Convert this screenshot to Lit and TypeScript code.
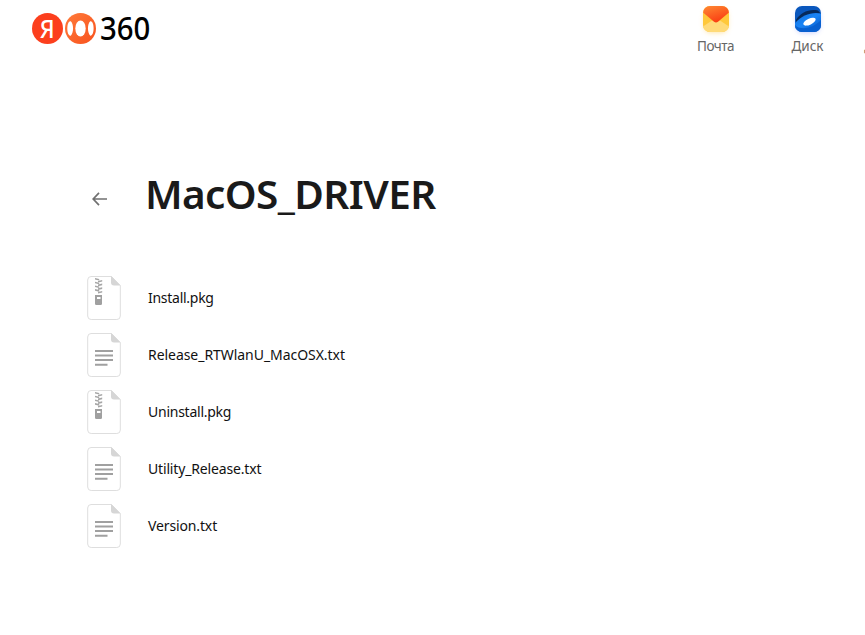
import { LitElement, html, css, svg } from "lit";
import { customElement, property } from "lit/decorators.js";

type FileKind = "archive" | "text";

@customElement("file-icon")
class FileIcon extends LitElement {
  @property() kind: FileKind = "text";

  static styles = css`
    :host { display: block; width: 34px; height: 44px; }
    svg { display: block; }
  `;

  render() {
    const teeth = [2, 5.7, 9.4, 13.1].map(
      (y) => svg`<path d="M8 ${y}l4.200 1v1.600l-4.200 -1ZM15.200 ${y + 1.9}l-4.200 1v1.600l4.200 -1Z" fill="#a6a6a6"/>`
    );
    return html`<svg width="34" height="44" viewBox="0 0 34 44">
      <path d="M4 .5H24.500L33.300 9.500V40a3.500 3.500 0 0 1-3.500 3.500H4.200A3.500 3.500 0 0 1 .7 40V4A3.500 3.500 0 0 1 4.200 .5Z" fill="#fff" stroke="#dedede"/>
      <path d="M24 0l9.500 9.500H27a3 3 0 0 1-3-3Z" fill="#d6d6d6"/>
      ${this.kind === "archive"
        ? svg`${teeth}<path fill-rule="evenodd" d="M8 19h7v8.700a1.300 1.300 0 0 1-1.300 1.300H9.300A1.300 1.300 0 0 1 8 27.700ZM10 21v2h3.500v-2Z" fill="#a0a0a0"/>`
        : svg`<path d="M8 18h18M8 22.500h18M8 27h18M8 31.700h12.500" stroke="#a0a0a0" stroke-width="1.900"/>`}
    </svg>`;
  }
}

@customElement("app-root")
class AppRoot extends LitElement {
  private files: { name: string; kind: FileKind; cls: string }[] = [
    { name: "Install.pkg", kind: "archive", cls: "install" },
    { name: "Release_RTWlanU_MacOSX.txt", kind: "text", cls: "release" },
    { name: "Uninstall.pkg", kind: "archive", cls: "uninstall" },
    { name: "Utility_Release.txt", kind: "text", cls: "utility" },
    { name: "Version.txt", kind: "text", cls: "version" },
  ];

  static styles = css`
    :host {
      display: block; width: 865px; height: 635px; overflow: hidden;
      background: #fff; color: #1a1a1a; font-family: "Noto Sans", sans-serif;
    }
    svg { display: block; overflow: visible; }
    header { display: flex; justify-content: space-between; height: 60px; }
    .logo { display: flex; margin: 13px 0 0 32px; height: 31px; }
    .services { display: flex; margin-right: -80.5px; }
    .service {
      display: flex; flex-direction: column; align-items: center;
      width: 92px; padding-top: 6px; font-size: 13.5px; line-height: 20px; color: #666;
    }
    .service svg { margin-bottom: 4px; }
    .mail { letter-spacing: -0.5px; }
    .disk { letter-spacing: 0; }
    .docs { letter-spacing: -0.45px; }
    .heading { display: flex; align-items: center; margin: 104px 0 0 92px; height: 60px; }
    .back { margin-top: 9px; }
    h1 { margin: 0 0 0 37px; font-size: 40.5px; line-height: 60px; font-weight: 600; letter-spacing: -0.6px; }
    ul { list-style: none; margin: 0; padding: 52px 0 0 87px; display: grid; row-gap: 13px; }
    li { display: flex; align-items: center; gap: 27px; height: 44px; font-size: 14px; line-height: 20px; color: #111; }
    .install { letter-spacing: -0.27px; }
    .release { letter-spacing: -0.05px; }
    .uninstall { letter-spacing: -0.25px; }
    .utility { letter-spacing: -0.16px; }
    .version { letter-spacing: -0.13px; }
  `;

  render() {
    return html`
      <header>
        <svg class="logo" width="118" height="31" viewBox="0 0 118 31">
          <defs>
            <linearGradient id="ring" x1="0" y1="0" x2="1" y2="1">
              <stop stop-color="#ff7b3a"/><stop offset="1" stop-color="#f8511d"/>
            </linearGradient>
          </defs>
          <circle cx="15.500" cy="15.500" r="15.500" fill="#fc3f1d"/>
          <text transform="translate(7.800 24.600) scale(.88 1)" font-size="26" font-weight="500" fill="#fff">Я</text>
          <circle cx="48.500" cy="15.500" r="15.500" fill="url(#ring)"/>
          <ellipse cx="48.500" cy="15.500" rx="5.200" ry="8" fill="#fff"/>
          <path d="M38.800 8.300c3 3 3 11.400 0 14.400C34.200 23.500 34.200 7.500 38.800 8.300ZM58.200 8.300c-3 3-3 11.400 0 14.400C62.800 23.500 62.800 7.500 58.200 8.300Z" fill="#fff"/>
          <text transform="translate(67.900 27) scale(.89 1)" font-size="33" font-weight="500" fill="#000">360</text>
        </svg>
        <nav class="services">
          <div class="service mail">
            <svg width="26" height="26" viewBox="0 0 26 26">
              <defs>
                <clipPath id="mc"><rect width="26" height="26" rx="7"/></clipPath>
                <linearGradient id="flap" x1="0" y1="0" x2=".5" y2="1">
                  <stop stop-color="#ff8a33"/><stop offset="1" stop-color="#fa3e13"/>
                </linearGradient>
                <filter id="ms" x="-50%" y="-50%" width="200%" height="200%"><feGaussianBlur stdDeviation="2.500"/></filter>
              </defs>
              <rect x="1" y="3" width="24" height="24" rx="7" fill="#ffcf58" opacity=".5" filter="url(#ms)"/>
              <g clip-path="url(#mc)">
                <rect width="26" height="26" fill="#ffc83a"/>
                <path d="M0 20.500L9 14.500H17L26 20.500V26H0Z" fill="#ffda78"/>
                <path d="M0 0H26V6.500L15 15.800Q13 17.300 11 15.800L0 6.500Z" fill="url(#flap)"/>
              </g>
            </svg>
            <span>Почта</span>
          </div>
          <div class="service disk">
            <svg width="26" height="26" viewBox="0 0 26 26">
              <defs>
                <clipPath id="dc"><rect width="26" height="26" rx="7"/></clipPath>
                <linearGradient id="saucer" x1="0" y1="0" x2="1" y2="1">
                  <stop stop-color="#0d6fe0"/><stop offset=".5" stop-color="#1a84f5"/><stop offset="1" stop-color="#0657c5"/>
                </linearGradient>
                <filter id="ds" x="-50%" y="-50%" width="200%" height="200%"><feGaussianBlur stdDeviation="2.500"/></filter>
              </defs>
              <rect x="1" y="3" width="24" height="24" rx="7" fill="#8298ff" opacity=".45" filter="url(#ds)"/>
              <g clip-path="url(#dc)">
                <rect width="26" height="26" fill="#0a57bd"/>
                <path d="M1 14C5 7 14 2.500 23 4.500L26 8C16 7 8 11 1 17Z" fill="#06295a"/>
                <path d="M0 17C7 9 17 5.500 26 7.500V17C20 22 10 25 0 23Z" fill="url(#saucer)"/>
                <path d="M0 19C5 24.500 18 23 26 14V26H0Z" fill="#0860d0"/>
                <ellipse cx="14.500" cy="15.700" rx="6.700" ry="3" transform="rotate(-25 14.500 15.700)" fill="#fff"/>
              </g>
            </svg>
            <span>Диск</span>
          </div>
          <div class="service docs">
            <svg width="26" height="26"></svg>
            <span>Документы</span>
          </div>
        </nav>
      </header>
      <main>
        <div class="heading">
          <svg class="back" width="16" height="14" viewBox="0 0 16 14">
            <path d="M7 .8L1.200 7L7 13.200M1.200 7H15" fill="none" stroke="#707070" stroke-width="1.700"/>
          </svg>
          <h1>MacOS_DRIVER</h1>
        </div>
        <ul>
          ${this.files.map((f) => html`<li><file-icon .kind=${f.kind}></file-icon><span class=${f.cls}>${f.name}</span></li>`)}
        </ul>
      </main>
    `;
  }
}
